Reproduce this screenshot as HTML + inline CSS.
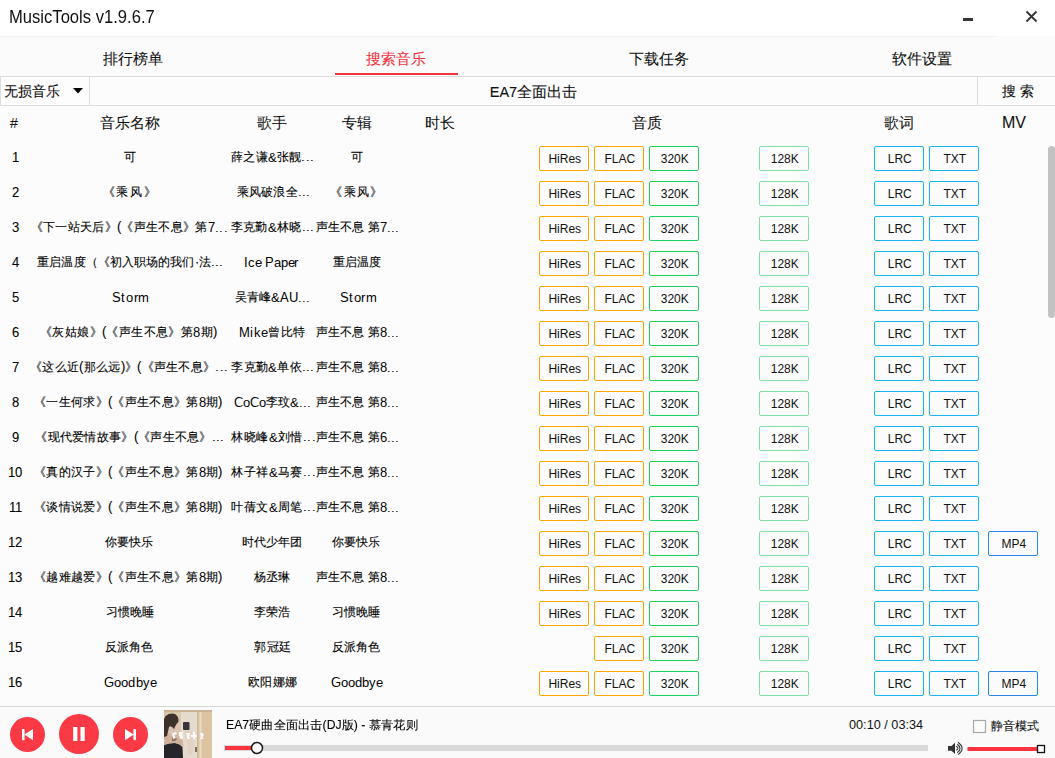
<!DOCTYPE html>
<html><head><meta charset="utf-8"><style>
@font-face{font-family:"LSr";src:local("Liberation Sans");size-adjust:105%}
*{margin:0;padding:0;box-sizing:border-box}
html,body{width:1055px;height:758px;overflow:hidden;background:#fcfcfc;font-family:"Liberation Sans",sans-serif;color:#000}
body div,body span{-webkit-text-stroke:0.1px currentColor}
.a{position:absolute;white-space:nowrap}
#title{position:absolute;left:0;top:0;width:1055px;height:36px;background:#fff}
#tabs{position:absolute;left:0;top:36px;width:1055px;height:41px;background:#fbfbfb;border-bottom:1px solid #dcdcdc}
.tab{position:absolute;top:14px;width:264px;text-align:center;font-size:15px;line-height:18px;color:#111}
#search{position:absolute;left:0;top:77px;width:1055px;height:29px;background:#fcfcfc;border-bottom:1px solid #dcdcdc}
#hdr .h{position:absolute;top:114px;font-size:15px;line-height:18px;text-align:center;color:#111}
.row{position:absolute;left:0;width:1040px;height:35px}
.row span{position:absolute;top:0;height:35px;line-height:35px;font-size:12px;font-family:"LSr","Liberation Sans",sans-serif;text-align:center;white-space:nowrap;overflow:hidden;color:#000}
.row .num{left:0;top:1px!important;width:30px;text-align:center}
.row .t{transform-origin:0 0}
em{font-style:normal;position:relative;top:1px;-webkit-text-stroke:0}
.ns,.bx{-webkit-text-stroke:0!important}
.tab,#hdr .h{-webkit-text-stroke:0.08px currentColor!important}
.bx{position:absolute;width:50px;height:25px;border:1px solid;border-radius:2px;font-size:12px;line-height:25px;padding-left:1.5px;text-align:center;color:#111}
#player{position:absolute;left:0;top:706px;width:1055px;height:52px;background:#fafafa;border-top:1px solid #d9d9d9}
.rb{position:absolute;border-radius:50%;background:#fc3a45}
</style></head><body>
<div id="title">
  <div class="a ns" style="left:9px;top:6.5px;font-size:18px;line-height:20px;color:#111;transform:scaleX(0.922);transform-origin:0 0">MusicTools v1.9.6.7</div>
  <div class="a" style="left:963px;top:18px;width:10px;height:3px;background:#333"></div>
  <svg class="a" style="left:1025px;top:10px" width="13" height="13" viewBox="0 0 13 13"><path d="M1.5 1.5L11.5 11.5M11.5 1.5L1.5 11.5" stroke="#333" stroke-width="1.8"/></svg>
</div>
<div class="a" style="left:0;top:36px;width:996px;height:1px;background:#f1f1f1;z-index:2"></div>
<div id="tabs">
  <div class="tab" style="left:1px">排行榜单</div>
  <div class="tab" style="left:264px;color:#f5333f">搜索音乐</div>
  <div class="tab" style="left:527px">下载任务</div>
  <div class="tab" style="left:790px">软件设置</div>
  <div class="a" style="left:335px;top:37px;width:123px;height:2px;background:#f5333f"></div>
</div>
<div id="search">
  <div class="a" style="left:0;top:0;width:90px;height:28px;border-left:1px solid #dcdcdc;border-right:1px solid #dcdcdc;background:#fdfdfd"></div>
  <div class="a" style="left:4px;top:5px;font-size:14px;line-height:18px;color:#111">无损音乐</div>
  <svg class="a" style="left:73px;top:11px" width="10" height="6"><path d="M0 0H10L5 5.5Z" fill="#000"/></svg>
  <div class="a" style="left:90px;top:5.5px;width:887px;text-align:center;font-size:14.5px;line-height:18px;color:#111">EA7全面出击</div>
  <div class="a" style="left:977px;top:0;width:1px;height:28px;background:#dcdcdc"></div>
  <div class="a" style="left:1002px;top:5px;font-size:14px;line-height:18px;letter-spacing:4px;color:#111">搜索</div>
</div>
<div id="hdr">
  <div class="h ns" style="left:10px;text-align:left;font-size:14px">#</div>
  <div class="h" style="left:80px;width:100px">音乐名称</div>
  <div class="h" style="left:222px;width:100px">歌手</div>
  <div class="h" style="left:307px;width:100px">专辑</div>
  <div class="h" style="left:390px;width:100px">时长</div>
  <div class="h" style="left:597px;width:100px">音质</div>
  <div class="h" style="left:849px;width:100px">歌词</div>
  <div class="h ns" style="left:964px;width:100px;font-size:16px">MV</div>
</div>
<div class="row" style="top:140px">
<span class="num">1</span>
<span class="c0 t" id="r0c0" style="left:-20.05px;width:300px;letter-spacing:0.000px">可</span>
<span class="c1 t" id="r0c1" style="left:122.65px;width:300px;letter-spacing:0.187px">薛之谦<em>&amp;</em>张靓...</span>
<span class="c2 t" id="r0c2" style="left:206.95px;width:300px;letter-spacing:0.000px">可</span>
</div>
<div class="bx" style="left:539px;top:146px;border-color:#ffa500">HiRes</div>
<div class="bx" style="left:594px;top:146px;border-color:#ffa500">FLAC</div>
<div class="bx" style="left:649px;top:146px;border-color:#1fcf66">320K</div>
<div class="bx" style="left:759px;top:146px;border-color:#7ee0a6">128K</div>
<div class="bx" style="left:874px;top:146px;border-color:#18b6f0">LRC</div>
<div class="bx" style="left:929px;top:146px;border-color:#18b6f0">TXT</div>
<div class="row" style="top:175px">
<span class="num">2</span>
<span class="c0 t" id="r1c0" style="left:-20.00px;width:300px;letter-spacing:1.667px">《乘风》</span>
<span class="c1 t" id="r1c1" style="left:123.60px;width:300px;letter-spacing:0.200px">乘风破浪全...</span>
<span class="c2 t" id="r1c2" style="left:206.90px;width:300px;letter-spacing:1.200px">《乘风》</span>
</div>
<div class="bx" style="left:539px;top:181px;border-color:#ffa500">HiRes</div>
<div class="bx" style="left:594px;top:181px;border-color:#ffa500">FLAC</div>
<div class="bx" style="left:649px;top:181px;border-color:#1fcf66">320K</div>
<div class="bx" style="left:759px;top:181px;border-color:#7ee0a6">128K</div>
<div class="bx" style="left:874px;top:181px;border-color:#18b6f0">LRC</div>
<div class="bx" style="left:929px;top:181px;border-color:#18b6f0">TXT</div>
<div class="row" style="top:210px">
<span class="num">3</span>
<span class="c0 t" id="r2c0" style="left:-20.75px;width:300px;letter-spacing:0.328px">《下一站天后》(《声生不息》第<em>7...</em></span>
<span class="c1 t" id="r2c1" style="left:122.65px;width:300px;letter-spacing:0.288px">李克勤<em>&amp;</em>林晓...</span>
<span class="c2 t" id="r2c2" style="left:207.25px;width:300px;letter-spacing:0.000px">声生不息 第<em>7...</em></span>
</div>
<div class="bx" style="left:539px;top:216px;border-color:#ffa500">HiRes</div>
<div class="bx" style="left:594px;top:216px;border-color:#ffa500">FLAC</div>
<div class="bx" style="left:649px;top:216px;border-color:#1fcf66">320K</div>
<div class="bx" style="left:759px;top:216px;border-color:#7ee0a6">128K</div>
<div class="bx" style="left:874px;top:216px;border-color:#18b6f0">LRC</div>
<div class="bx" style="left:929px;top:216px;border-color:#18b6f0">TXT</div>
<div class="row" style="top:245px">
<span class="num">4</span>
<span class="c0 t" id="r3c0" style="left:-19.85px;width:300px;letter-spacing:0.100px">重启温度（《初入职场的我们·法...</span>
<span class="c1 t" id="r3c1" style="left:121.10px;width:300px;letter-spacing:-0.175px"><em>Ice Paper</em></span>
<span class="c2 t" id="r3c2" style="left:207.30px;width:300px;letter-spacing:0.000px">重启温度</span>
</div>
<div class="bx" style="left:539px;top:251px;border-color:#ffa500">HiRes</div>
<div class="bx" style="left:594px;top:251px;border-color:#ffa500">FLAC</div>
<div class="bx" style="left:649px;top:251px;border-color:#1fcf66">320K</div>
<div class="bx" style="left:759px;top:251px;border-color:#7ee0a6">128K</div>
<div class="bx" style="left:874px;top:251px;border-color:#18b6f0">LRC</div>
<div class="bx" style="left:929px;top:251px;border-color:#18b6f0">TXT</div>
<div class="row" style="top:280px">
<span class="num">5</span>
<span class="c0 t" id="r4c0" style="left:-19.15px;width:300px;letter-spacing:0.575px"><em>Storm</em></span>
<span class="c1 t" id="r4c1" style="left:122.10px;width:300px;letter-spacing:0.000px">吴青峰<em>&amp;AU...</em></span>
<span class="c2 t" id="r4c2" style="left:208.40px;width:300px;letter-spacing:0.500px"><em>Storm</em></span>
</div>
<div class="bx" style="left:539px;top:286px;border-color:#ffa500">HiRes</div>
<div class="bx" style="left:594px;top:286px;border-color:#ffa500">FLAC</div>
<div class="bx" style="left:649px;top:286px;border-color:#1fcf66">320K</div>
<div class="bx" style="left:759px;top:286px;border-color:#7ee0a6">128K</div>
<div class="bx" style="left:874px;top:286px;border-color:#18b6f0">LRC</div>
<div class="bx" style="left:929px;top:286px;border-color:#18b6f0">TXT</div>
<div class="row" style="top:315px">
<span class="num">6</span>
<span class="c0 t" id="r5c0" style="left:-21.25px;width:300px;letter-spacing:0.393px">《灰姑娘》(《声生不息》第<em>8</em>期)</span>
<span class="c1 t" id="r5c1" style="left:122.10px;width:300px;letter-spacing:0.367px"><em>Mike</em>曾比特</span>
<span class="c2 t" id="r5c2" style="left:207.25px;width:300px;letter-spacing:0.000px">声生不息 第<em>8...</em></span>
</div>
<div class="bx" style="left:539px;top:321px;border-color:#ffa500">HiRes</div>
<div class="bx" style="left:594px;top:321px;border-color:#ffa500">FLAC</div>
<div class="bx" style="left:649px;top:321px;border-color:#1fcf66">320K</div>
<div class="bx" style="left:759px;top:321px;border-color:#7ee0a6">128K</div>
<div class="bx" style="left:874px;top:321px;border-color:#18b6f0">LRC</div>
<div class="bx" style="left:929px;top:321px;border-color:#18b6f0">TXT</div>
<div class="row" style="top:350px">
<span class="num">7</span>
<span class="c0 t" id="r6c0" style="left:-20.75px;width:300px;letter-spacing:0.311px">《这么近(那么远)》(《声生不息》...</span>
<span class="c1 t" id="r6c1" style="left:122.95px;width:300px;letter-spacing:0.237px">李克勤<em>&amp;</em>单依...</span>
<span class="c2 t" id="r6c2" style="left:207.25px;width:300px;letter-spacing:0.000px">声生不息 第<em>8...</em></span>
</div>
<div class="bx" style="left:539px;top:356px;border-color:#ffa500">HiRes</div>
<div class="bx" style="left:594px;top:356px;border-color:#ffa500">FLAC</div>
<div class="bx" style="left:649px;top:356px;border-color:#1fcf66">320K</div>
<div class="bx" style="left:759px;top:356px;border-color:#7ee0a6">128K</div>
<div class="bx" style="left:874px;top:356px;border-color:#18b6f0">LRC</div>
<div class="bx" style="left:929px;top:356px;border-color:#18b6f0">TXT</div>
<div class="row" style="top:385px">
<span class="num">8</span>
<span class="c0 t" id="r7c0" style="left:-21.75px;width:300px;letter-spacing:0.331px">《一生何求》(《声生不息》第<em>8</em>期)</span>
<span class="c1 t" id="r7c1" style="left:122.35px;width:300px;letter-spacing:0.000px"><em>CoCo</em>李玟<em>&amp;...</em></span>
<span class="c2 t" id="r7c2" style="left:207.25px;width:300px;letter-spacing:0.000px">声生不息 第<em>8...</em></span>
</div>
<div class="bx" style="left:539px;top:391px;border-color:#ffa500">HiRes</div>
<div class="bx" style="left:594px;top:391px;border-color:#ffa500">FLAC</div>
<div class="bx" style="left:649px;top:391px;border-color:#1fcf66">320K</div>
<div class="bx" style="left:759px;top:391px;border-color:#7ee0a6">128K</div>
<div class="bx" style="left:874px;top:391px;border-color:#18b6f0">LRC</div>
<div class="bx" style="left:929px;top:391px;border-color:#18b6f0">TXT</div>
<div class="row" style="top:420px">
<span class="num">9</span>
<span class="c0 t" id="r8c0" style="left:-20.05px;width:300px;letter-spacing:0.300px">《现代爱情故事》(《声生不息》...</span>
<span class="c1 t" id="r8c1" style="left:123.70px;width:300px;letter-spacing:0.450px">林晓峰<em>&amp;</em>刘惜...</span>
<span class="c2 t" id="r8c2" style="left:207.25px;width:300px;letter-spacing:0.000px">声生不息 第<em>6...</em></span>
</div>
<div class="bx" style="left:539px;top:426px;border-color:#ffa500">HiRes</div>
<div class="bx" style="left:594px;top:426px;border-color:#ffa500">FLAC</div>
<div class="bx" style="left:649px;top:426px;border-color:#1fcf66">320K</div>
<div class="bx" style="left:759px;top:426px;border-color:#7ee0a6">128K</div>
<div class="bx" style="left:874px;top:426px;border-color:#18b6f0">LRC</div>
<div class="bx" style="left:929px;top:426px;border-color:#18b6f0">TXT</div>
<div class="row" style="top:455px">
<span class="num">10</span>
<span class="c0 t" id="r9c0" style="left:-21.75px;width:300px;letter-spacing:0.331px">《真的汉子》(《声生不息》第<em>8</em>期)</span>
<span class="c1 t" id="r9c1" style="left:123.70px;width:300px;letter-spacing:0.450px">林子祥<em>&amp;</em>马赛...</span>
<span class="c2 t" id="r9c2" style="left:207.25px;width:300px;letter-spacing:0.000px">声生不息 第<em>8...</em></span>
</div>
<div class="bx" style="left:539px;top:461px;border-color:#ffa500">HiRes</div>
<div class="bx" style="left:594px;top:461px;border-color:#ffa500">FLAC</div>
<div class="bx" style="left:649px;top:461px;border-color:#1fcf66">320K</div>
<div class="bx" style="left:759px;top:461px;border-color:#7ee0a6">128K</div>
<div class="bx" style="left:874px;top:461px;border-color:#18b6f0">LRC</div>
<div class="bx" style="left:929px;top:461px;border-color:#18b6f0">TXT</div>
<div class="row" style="top:490px">
<span class="num">11</span>
<span class="c0 t" id="r10c0" style="left:-21.75px;width:300px;letter-spacing:0.331px">《谈情说爱》(《声生不息》第<em>8</em>期)</span>
<span class="c1 t" id="r10c1" style="left:123.70px;width:300px;letter-spacing:0.450px">叶蒨文<em>&amp;</em>周笔...</span>
<span class="c2 t" id="r10c2" style="left:207.25px;width:300px;letter-spacing:0.000px">声生不息 第<em>8...</em></span>
</div>
<div class="bx" style="left:539px;top:496px;border-color:#ffa500">HiRes</div>
<div class="bx" style="left:594px;top:496px;border-color:#ffa500">FLAC</div>
<div class="bx" style="left:649px;top:496px;border-color:#1fcf66">320K</div>
<div class="bx" style="left:759px;top:496px;border-color:#7ee0a6">128K</div>
<div class="bx" style="left:874px;top:496px;border-color:#18b6f0">LRC</div>
<div class="bx" style="left:929px;top:496px;border-color:#18b6f0">TXT</div>
<div class="row" style="top:525px">
<span class="num">12</span>
<span class="c0 t" id="r11c0" style="left:-20.60px;width:300px;letter-spacing:0.000px">你要快乐</span>
<span class="c1 t" id="r11c1" style="left:122.20px;width:300px;letter-spacing:0.000px">时代少年团</span>
<span class="c2 t" id="r11c2" style="left:206.30px;width:300px;letter-spacing:0.000px">你要快乐</span>
</div>
<div class="bx" style="left:539px;top:531px;border-color:#ffa500">HiRes</div>
<div class="bx" style="left:594px;top:531px;border-color:#ffa500">FLAC</div>
<div class="bx" style="left:649px;top:531px;border-color:#1fcf66">320K</div>
<div class="bx" style="left:759px;top:531px;border-color:#7ee0a6">128K</div>
<div class="bx" style="left:874px;top:531px;border-color:#18b6f0">LRC</div>
<div class="bx" style="left:929px;top:531px;border-color:#18b6f0">TXT</div>
<div class="bx" style="left:988px;top:531px;border-color:#2a86e6">MP4</div>
<div class="row" style="top:560px">
<span class="num">13</span>
<span class="c0 t" id="r12c0" style="left:-21.75px;width:300px;letter-spacing:0.331px">《越难越爱》(《声生不息》第<em>8</em>期)</span>
<span class="c1 t" id="r12c1" style="left:121.90px;width:300px;letter-spacing:0.000px">杨丞琳</span>
<span class="c2 t" id="r12c2" style="left:207.25px;width:300px;letter-spacing:0.000px">声生不息 第<em>8...</em></span>
</div>
<div class="bx" style="left:539px;top:566px;border-color:#ffa500">HiRes</div>
<div class="bx" style="left:594px;top:566px;border-color:#ffa500">FLAC</div>
<div class="bx" style="left:649px;top:566px;border-color:#1fcf66">320K</div>
<div class="bx" style="left:759px;top:566px;border-color:#7ee0a6">128K</div>
<div class="bx" style="left:874px;top:566px;border-color:#18b6f0">LRC</div>
<div class="bx" style="left:929px;top:566px;border-color:#18b6f0">TXT</div>
<div class="row" style="top:595px">
<span class="num">14</span>
<span class="c0 t" id="r13c0" style="left:-20.50px;width:300px;letter-spacing:0.000px">习惯晚睡</span>
<span class="c1 t" id="r13c1" style="left:121.90px;width:300px;letter-spacing:0.000px">李荣浩</span>
<span class="c2 t" id="r13c2" style="left:206.40px;width:300px;letter-spacing:0.000px">习惯晚睡</span>
</div>
<div class="bx" style="left:539px;top:601px;border-color:#ffa500">HiRes</div>
<div class="bx" style="left:594px;top:601px;border-color:#ffa500">FLAC</div>
<div class="bx" style="left:649px;top:601px;border-color:#1fcf66">320K</div>
<div class="bx" style="left:759px;top:601px;border-color:#7ee0a6">128K</div>
<div class="bx" style="left:874px;top:601px;border-color:#18b6f0">LRC</div>
<div class="bx" style="left:929px;top:601px;border-color:#18b6f0">TXT</div>
<div class="row" style="top:630px">
<span class="num">15</span>
<span class="c0 t" id="r14c0" style="left:-20.60px;width:300px;letter-spacing:0.000px">反派角色</span>
<span class="c1 t" id="r14c1" style="left:122.90px;width:300px;letter-spacing:0.400px">郭冠廷</span>
<span class="c2 t" id="r14c2" style="left:206.30px;width:300px;letter-spacing:0.000px">反派角色</span>
</div>
<div class="bx" style="left:594px;top:636px;border-color:#ffa500">FLAC</div>
<div class="bx" style="left:649px;top:636px;border-color:#1fcf66">320K</div>
<div class="bx" style="left:759px;top:636px;border-color:#7ee0a6">128K</div>
<div class="bx" style="left:874px;top:636px;border-color:#18b6f0">LRC</div>
<div class="bx" style="left:929px;top:636px;border-color:#18b6f0">TXT</div>
<div class="row" style="top:665px">
<span class="num">16</span>
<span class="c0 t" id="r15c0" style="left:-19.55px;width:300px;letter-spacing:0.150px"><em>Goodbye</em></span>
<span class="c1 t" id="r15c1" style="left:122.60px;width:300px;letter-spacing:0.333px">欧阳娜娜</span>
<span class="c2 t" id="r15c2" style="left:206.70px;width:300px;letter-spacing:0.000px"><em>Goodbye</em></span>
</div>
<div class="bx" style="left:539px;top:671px;border-color:#ffa500">HiRes</div>
<div class="bx" style="left:594px;top:671px;border-color:#ffa500">FLAC</div>
<div class="bx" style="left:649px;top:671px;border-color:#1fcf66">320K</div>
<div class="bx" style="left:759px;top:671px;border-color:#7ee0a6">128K</div>
<div class="bx" style="left:874px;top:671px;border-color:#18b6f0">LRC</div>
<div class="bx" style="left:929px;top:671px;border-color:#18b6f0">TXT</div>
<div class="bx" style="left:988px;top:671px;border-color:#2a86e6">MP4</div>
<div class="a" style="left:1048px;top:146px;width:7px;height:172px;border-radius:4px;background:#c2c2c2"></div>
<div id="player"></div>
<svg class="a" style="left:0;top:706px" width="1055" height="52" viewBox="0 706 1055 52">
  <circle cx="27.5" cy="734.5" r="17.5" fill="#fc3a45"/>
  <circle cx="79" cy="734" r="20" fill="#fc3a45"/>
  <circle cx="130.5" cy="734.5" r="17.5" fill="#fc3a45"/>
  <rect x="22" y="729" width="2.6" height="11.3" rx="0.8" fill="#fff"/>
  <path d="M24.3 734.6L33 729V740.3Z" fill="#fff"/>
  <rect x="133.4" y="729" width="2.6" height="11.3" rx="0.8" fill="#fff"/>
  <path d="M133.7 734.6L125 729V740.3Z" fill="#fff"/>
  <rect x="73.2" y="727" width="4.2" height="14" fill="#fff"/>
  <rect x="80.5" y="727" width="4.2" height="14" fill="#fff"/>
  <rect x="224" y="745" width="704" height="6" fill="#d9d9d9"/>
  <rect x="225" y="746" width="32" height="4" fill="#fc3440"/>
  <circle cx="257" cy="748" r="5.5" fill="#fff" stroke="#1a1a1a" stroke-width="1.5"/>
  <rect x="973.5" y="720.5" width="12" height="12" fill="#fbfbfb" stroke="#a8a8a8" stroke-width="1.2"/>
  <rect x="967.5" y="747" width="71" height="4" fill="#fc3440"/>
  <rect x="1037.5" y="745.5" width="7" height="7" fill="#fff" stroke="#111" stroke-width="1.3"/>
  <path d="M948 746H951.5L955 742.8V754L951.5 750.8H948Z" fill="#333"/>
  <path d="M956.2 746.3Q959.8 748.3 956.2 750.3M957.3 744.2Q962.8 748.4 957.3 752.6M958 742.2Q966.2 748.4 958 754.6" stroke="#333" stroke-width="1.1" fill="none"/>
</svg>
<div class="a" style="left:164px;top:710px;width:48px;height:48px;overflow:hidden;background:#d8c6ad">
  <svg width="48" height="48" viewBox="0 0 48 48">
    <defs><filter id="bl" x="-20%" y="-20%" width="140%" height="140%"><feGaussianBlur stdDeviation="0.7"/></filter>
    <filter id="bl2" x="-20%" y="-50%" width="140%" height="200%"><feGaussianBlur stdDeviation="0.5"/></filter></defs>
    <rect width="48" height="48" fill="#d9c6ab"/>
    <g filter="url(#bl)">
    <rect x="17" y="1" width="17" height="47" fill="#e5dbcd"/>
    <rect x="33" y="0" width="1.5" height="48" fill="#cfb697"/>
    <rect x="34.5" y="0" width="13.5" height="48" fill="#dcc3a1"/>
    <rect x="35.5" y="0" width="2" height="48" fill="#eadcc5"/>
    <rect x="0" y="0" width="48" height="2" fill="#c9b396"/>
    <path d="M0 35Q5 33 11 33Q16 34 18.5 37L19 48H0Z" fill="#27262c"/>
    <path d="M0 24Q6 22 12 24Q17 27 19 31L19.5 37Q15 33 10 33Q4 33 0 35Z" fill="#d1b29d"/>
    <path d="M5 13Q11 11 15 17Q15 24 11 26L5 25Z" fill="#dcc2b0"/>
    <path d="M1.5 6Q6 2.5 11 4Q15 6.5 14.5 11.5Q12 14 10 19Q7 15 5 17L3 26L0 27V9Z" fill="#3d302a"/>
    <path d="M19.5 19Q24 17 27.5 21Q30.5 29 29.5 39Q28 45 24.5 44Q23.5 34 21.5 27Z" fill="#e3d1c3"/>
    <rect x="19" y="12" width="6.5" height="8" rx="1" fill="#34343a"/>
    <path d="M8 27Q11 26 13 29Q11 32 8 31Z" fill="#8f7465"/>
    <rect x="31" y="37" width="2" height="5" fill="#7f6d5d"/>
    </g>
    <g fill="#fff" opacity="0.92" filter="url(#bl2)">
      <path d="M8 23l4-1 1 2-3 1 2 3-3 1zM15 22h4v2h-1l1 4-3 1-1-4z"/>
      <path d="M22 23l4 0 0 2-1 1 1 3-3 0 0-3zM29 22h2v3h2v2h-2v2h-2v-2h-2v-2h2z"/>
      <path d="M36 23l3 0 1 3-2 1 2 2-4 0 1-2z"/>
    </g>
  </svg>
</div>
<div class="a" style="left:226px;top:717px;transform:scaleX(1.02);transform-origin:0 0;font-size:12px;font-family:LSr,"Liberation Sans",sans-serif;line-height:18px;color:#111">EA7硬曲全面出击(DJ版) - 慕青花则</div>
<div class="a ns" style="left:849px;top:716px;font-size:12.7px;line-height:18px;color:#111">00:10 / 03:34</div>
<div class="a" style="left:991px;top:717px;font-size:12px;line-height:18px;color:#111">静音模式</div>
</body></html>
